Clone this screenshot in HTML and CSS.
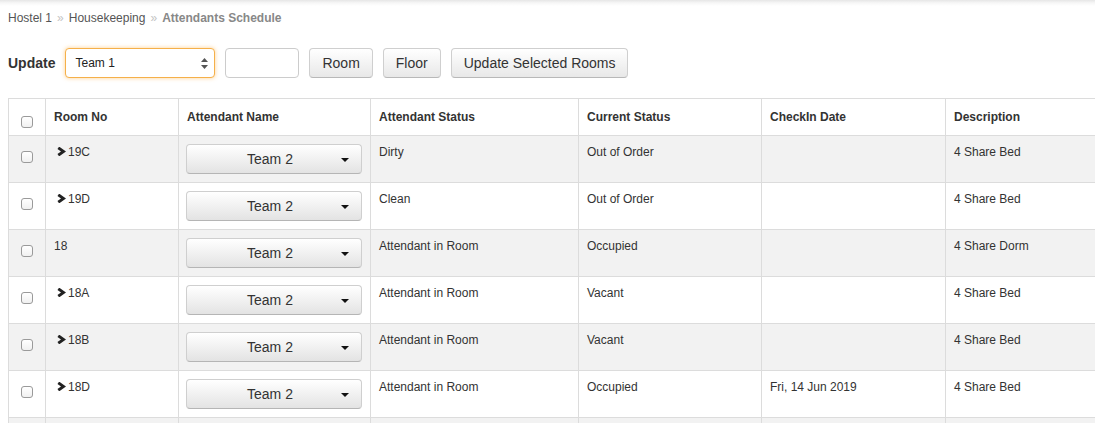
FILE: index.html
```html
<!DOCTYPE html>
<html>
<head>
<meta charset="utf-8">
<link rel="stylesheet" href="styles.css">
</head>
<body>
<div class="page">
  <div class="crumbs">
    <span class="crumb">Hostel 1</span><span class="sep">»</span><span class="crumb">Housekeeping</span><span class="sep">»</span><span class="crumb current">Attendants Schedule</span>
  </div>
  <div class="toolbar">
    <span class="tb-label">Update</span>
    <div class="select">
      <span>Team 1</span>
      <svg class="updown" width="7" height="11" viewBox="0 0 7 11"><path d="M3.5 0 L7 4 L0 4 Z M0 7 L7 7 L3.5 11 Z" fill="#555"/></svg>
    </div>
    <input class="tb-input" type="text">
    <button class="btn">Room</button>
    <button class="btn">Floor</button>
    <button class="btn">Update Selected Rooms</button>
  </div>
  <table class="grid">
    <colgroup>
      <col class="c-check"><col class="c-room"><col class="c-att"><col class="c-astat"><col class="c-cstat"><col class="c-date"><col class="c-desc">
    </colgroup>
    <thead>
      <tr>
        <th><input type="checkbox" class="cb"></th>
        <th>Room No</th>
        <th>Attendant Name</th>
        <th>Attendant Status</th>
        <th>Current Status</th>
        <th>CheckIn Date</th>
        <th>Description</th>
      </tr>
    </thead>
    <tbody>
      <tr>
        <td><input type="checkbox" class="cb"></td>
        <td><svg class="chev" width="9" height="9" viewBox="0 0 9 9"><polyline points="1.3,0.8 6.6,4.5 1.3,8.2" fill="none" stroke="#222" stroke-width="2.9"/></svg>19C</td>
        <td><div class="dd"><span>Team 2</span><i class="caret"></i></div></td>
        <td>Dirty</td><td>Out of Order</td><td></td><td>4 Share Bed</td>
      </tr>
      <tr>
        <td><input type="checkbox" class="cb"></td>
        <td><svg class="chev" width="9" height="9" viewBox="0 0 9 9"><polyline points="1.3,0.8 6.6,4.5 1.3,8.2" fill="none" stroke="#222" stroke-width="2.9"/></svg>19D</td>
        <td><div class="dd"><span>Team 2</span><i class="caret"></i></div></td>
        <td>Clean</td><td>Out of Order</td><td></td><td>4 Share Bed</td>
      </tr>
      <tr>
        <td><input type="checkbox" class="cb"></td>
        <td>18</td>
        <td><div class="dd"><span>Team 2</span><i class="caret"></i></div></td>
        <td>Attendant in Room</td><td>Occupied</td><td></td><td>4 Share Dorm</td>
      </tr>
      <tr>
        <td><input type="checkbox" class="cb"></td>
        <td><svg class="chev" width="9" height="9" viewBox="0 0 9 9"><polyline points="1.3,0.8 6.6,4.5 1.3,8.2" fill="none" stroke="#222" stroke-width="2.9"/></svg>18A</td>
        <td><div class="dd"><span>Team 2</span><i class="caret"></i></div></td>
        <td>Attendant in Room</td><td>Vacant</td><td></td><td>4 Share Bed</td>
      </tr>
      <tr>
        <td><input type="checkbox" class="cb"></td>
        <td><svg class="chev" width="9" height="9" viewBox="0 0 9 9"><polyline points="1.3,0.8 6.6,4.5 1.3,8.2" fill="none" stroke="#222" stroke-width="2.9"/></svg>18B</td>
        <td><div class="dd"><span>Team 2</span><i class="caret"></i></div></td>
        <td>Attendant in Room</td><td>Vacant</td><td></td><td>4 Share Bed</td>
      </tr>
      <tr>
        <td><input type="checkbox" class="cb"></td>
        <td><svg class="chev" width="9" height="9" viewBox="0 0 9 9"><polyline points="1.3,0.8 6.6,4.5 1.3,8.2" fill="none" stroke="#222" stroke-width="2.9"/></svg>18D</td>
        <td><div class="dd"><span>Team 2</span><i class="caret"></i></div></td>
        <td>Attendant in Room</td><td>Occupied</td><td>Fri, 14 Jun 2019</td><td>4 Share Bed</td>
      </tr>
      <tr class="partial">
        <td></td><td></td><td></td><td></td><td></td><td></td><td></td>
      </tr>
    </tbody>
  </table>
</div>
</body>
</html>
```
FILE: styles.css
```css
html {
  overflow: hidden;
  background: #fff;
}
body {
  margin: 0;
  font-family: "Liberation Sans", Arial, Helvetica, sans-serif;
  font-size: 12px;
  color: #333;
  background: linear-gradient(#e6e6e6, #f7f7f7 3px, #fff 6px) no-repeat;
  background-size: 100% 6px;
  min-height: 423px;
}
.page {
  padding: 8px 0 0 8px;
}
.crumbs {
  line-height: 20px;
  height: 20px;
  color: #555;
  white-space: nowrap;
}
.sep {
  color: #c4c4c4;
  margin: 0 5px;
}
.current {
  font-weight: bold;
  color: #888;
}
.toolbar {
  display: flex;
  align-items: center;
  gap: 10px;
  margin-top: 20px;
  height: 30px;
}
.tb-label {
  font-weight: bold;
  font-size: 14px;
  color: #333;
}
.select {
  box-sizing: border-box;
  width: 150px;
  height: 30px;
  border: 1px solid #f5b04a;
  border-radius: 4px;
  box-shadow: 0 0 4px rgba(255, 170, 50, 0.55);
  background: #fff;
  display: flex;
  align-items: center;
  justify-content: space-between;
  padding: 0 6px 0 9px;
  font-size: 12px;
  color: #222;
}
.updown {
  display: block;
}
.tb-input {
  box-sizing: border-box;
  width: 74px;
  height: 30px;
  border: 1px solid #ccc;
  border-radius: 4px;
  margin: 0;
  padding: 0 6px;
  background: #fff;
}
.btn {
  box-sizing: border-box;
  height: 30px;
  margin: 0;
  padding: 0 12px;
  font-family: "Liberation Sans", Arial, Helvetica, sans-serif;
  font-size: 14px;
  color: #333;
  background: linear-gradient(#ffffff, #e8e8e8);
  border: 1px solid #cfcfcf;
  border-bottom-color: #b8b8b8;
  border-radius: 4px;
}
.grid {
  margin-top: 20px;
  border-collapse: collapse;
  table-layout: fixed;
  width: 1130px;
}
.c-check { width: 37px; }
.c-room { width: 133px; }
.c-att { width: 192px; }
.c-astat { width: 208px; }
.c-cstat { width: 183px; }
.c-date { width: 184px; }
.c-desc { width: 193px; }
.grid th,
.grid td {
  border: 1px solid #dcdcdc;
  padding: 8px;
  text-align: left;
  vertical-align: top;
  white-space: nowrap;
}
.grid th {
  line-height: 20px;
  font-weight: bold;
  color: #333;
}
.grid td {
  line-height: 16px;
}
.grid th:first-child,
.grid td:first-child {
  padding: 0;
  text-align: center;
}
.grid tbody tr:nth-child(odd) td {
  background: #f2f2f2;
}
.partial td {
  height: 20px;
}
.cb {
  -webkit-appearance: none;
  appearance: none;
  display: block;
  box-sizing: border-box;
  width: 12px;
  height: 12px;
  margin: 15px auto 0;
  border: 1px solid #9a9a9a;
  border-radius: 3px;
  background: linear-gradient(#ffffff, #f0f0f0);
}
.grid th .cb {
  margin-top: 17px;
}
.chev {
  display: inline-block;
  vertical-align: 0;
  margin: 0 2px 0 3px;
}
.dd {
  position: relative;
  box-sizing: border-box;
  height: 30px;
  margin-left: -1px;
  padding: 0 20px 0 12px;
  border: 1px solid #cfcfcf;
  border-bottom-color: #b5b5b5;
  border-radius: 4px;
  background: linear-gradient(#ffffff, #e3e3e3);
  font-size: 14px;
  line-height: 28px;
  color: #333;
  text-align: center;
}
.caret {
  position: absolute;
  right: 12px;
  top: 13px;
  width: 0;
  height: 0;
  border-left: 4px solid transparent;
  border-right: 4px solid transparent;
  border-top: 4px solid #111;
}
```
